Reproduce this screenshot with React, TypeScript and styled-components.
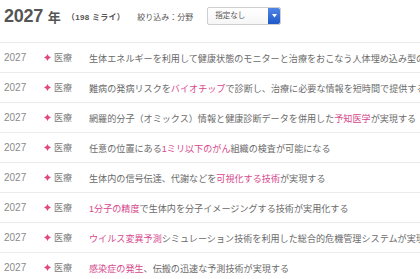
import React from 'react';
import styled, { createGlobalStyle } from 'styled-components';

const GlobalStyle = createGlobalStyle`
  body {
    margin: 0;
    background: #fff;
    font-family: "Liberation Sans", "Noto Sans CJK JP", sans-serif;
  }
`;

const Container = styled.div`
  width: 420px;
  overflow: hidden;
`;

const Header = styled.div`
  display: flex;
  align-items: center;
  height: 32px;
  padding: 0 4px;
  color: #555;
`;

const YearTitle = styled.span`
  font-size: 18px;
  font-weight: bold;
  letter-spacing: -0.3px;
`;

const YearUnit = styled.span`
  font-size: 13px;
  font-weight: bold;
  margin-left: 5px;
`;

const Count = styled.span`
  font-size: 8px;
  font-weight: bold;
  margin-left: 6px;
  letter-spacing: 0.3px;
`;

const FilterLabel = styled.span`
  font-size: 8px;
  margin-left: 12px;
  color: #555;
`;

const Select = styled.div`
  display: flex;
  align-items: stretch;
  width: 72px;
  height: 16px;
  margin-left: 14px;
  border: 1px solid #cfcfcf;
  border-radius: 2px;
  background: linear-gradient(#fff, #f6f6f6);
`;

const SelectText = styled.span`
  flex: 1;
  font-size: 7.5px;
  line-height: 16px;
  padding-left: 7px;
  color: #555;
`;

const SelectButton = styled.span`
  width: 12px;
  display: flex;
  align-items: center;
  justify-content: center;
  background: linear-gradient(#4f87e6, #1f58c8);
  border-radius: 0 2px 2px 0;
`;

const List = styled.div`
  margin-top: 10px;
`;

const Row = styled.div`
  display: flex;
  align-items: center;
  height: 29px;
  padding-left: 4px;
  border-top: 1px solid #ececec;
  white-space: nowrap;
`;

const Year = styled.span`
  width: 40px;
  flex-shrink: 0;
  font-size: 10px;
  color: #8a8a8a;
`;

const Mark = styled.span`
  display: flex;
  width: 10px;
  flex-shrink: 0;
`;

const Category = styled.span`
  width: 35px;
  flex-shrink: 0;
  font-size: 9px;
  color: #777;
`;

const Text = styled.span`
  font-size: 9.1px;
  color: #6a6a6a;
  overflow: hidden;
`;

const Em = styled.span`
  color: #d6488c;
`;

type Part = string | { em: string };

const items: Part[][] = [
  ['生体エネルギーを利用して健康状態のモニターと治療をおこなう人体埋め込み型の装置が実用化する'],
  ['難病の発病リスクを', { em: 'バイオチップ' }, 'で診断し、治療に必要な情報を短時間で提供するシステムが実現する'],
  ['網羅的分子（オミックス）情報と健康診断データを併用した', { em: '予知医学' }, 'が実現する'],
  ['任意の位置にある', { em: '1ミリ以下のがん' }, '組織の検査が可能になる'],
  ['生体内の信号伝達、代謝などを', { em: '可視化する技術' }, 'が実現する'],
  [{ em: '1分子の精度' }, 'で生体内を分子イメージングする技術が実用化する'],
  [{ em: 'ウイルス変異予測' }, 'シミュレーション技術を利用した総合的危機管理システムが実現する'],
  [{ em: '感染症の発生' }, '、伝搬の迅速な予測技術が実現する'],
];

const Star = () => (
  <svg width="7" height="7" viewBox="0 0 10 10">
    <path d="M5 0 Q6 4 10 5 Q6 6 5 10 Q4 6 0 5 Q4 4 5 0 Z" fill="#e4467f" />
  </svg>
);

const App: React.FC = () => {
  return (
    <Container>
      <GlobalStyle />
      <Header>
        <YearTitle>2027</YearTitle>
        <YearUnit>年</YearUnit>
        <Count>（198 ミライ）</Count>
        <FilterLabel>絞り込み：分野</FilterLabel>
        <Select>
          <SelectText>指定なし</SelectText>
          <SelectButton>
            <svg width="5" height="4" viewBox="0 0 5 4">
              <path d="M0 0 L5 0 L2.5 3.5 Z" fill="#fff" />
            </svg>
          </SelectButton>
        </Select>
      </Header>
      <List>
        {items.map((parts, i) => (
          <Row key={i}>
            <Year>2027</Year>
            <Mark>
              <Star />
            </Mark>
            <Category>医療</Category>
            <Text>
              {parts.map((p, j) =>
                typeof p === 'string' ? <React.Fragment key={j}>{p}</React.Fragment> : <Em key={j}>{p.em}</Em>
              )}
            </Text>
          </Row>
        ))}
      </List>
    </Container>
  );
};

export default App;
